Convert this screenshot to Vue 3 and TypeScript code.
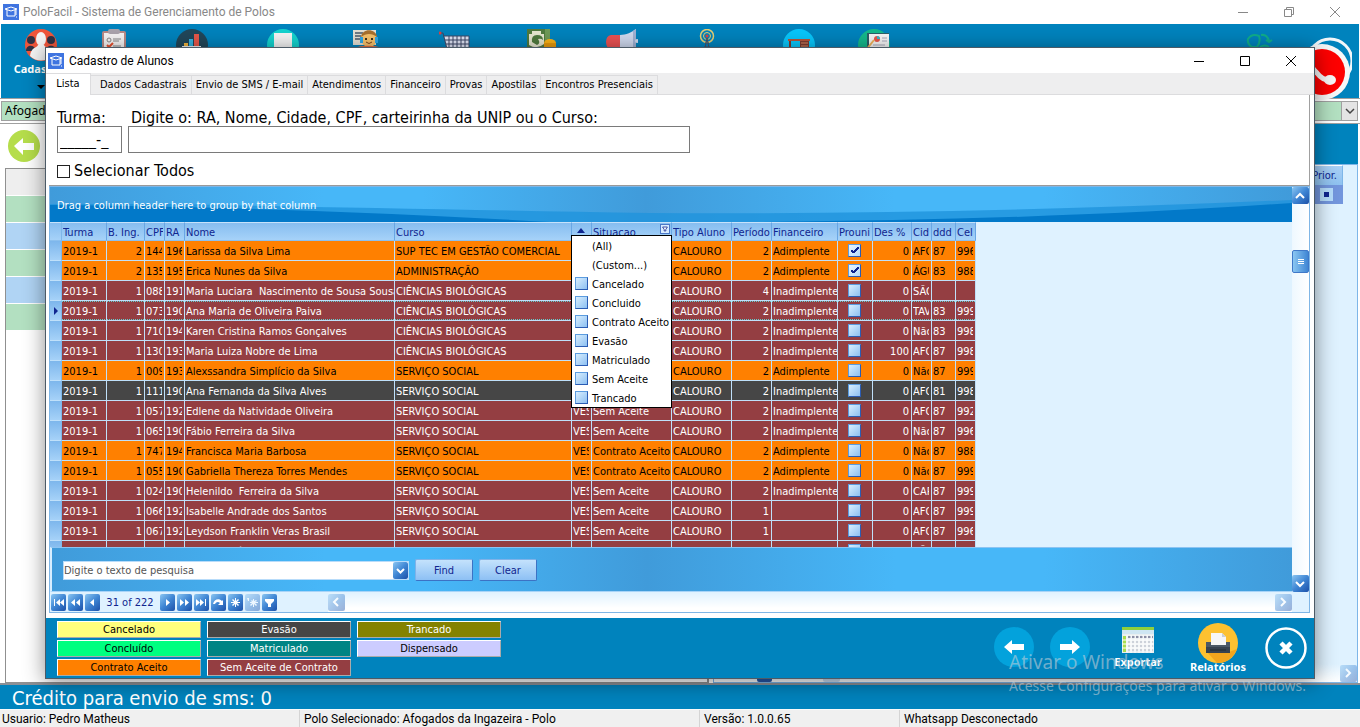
<script setup lang="ts">
import { computed, ref } from 'vue'

type Status = 'Cancelado' | 'Concluído' | 'Contrato Aceito' | 'Evasão' | 'Matriculado' | 'Sem Aceite' | 'Trancado' | 'Dispensado'

interface Aluno {
  ing: string
  cpf: string
  ra: string
  nome: string
  curso: string
  situacao: Status
  periodo: string
  financeiro: string
  prouni: boolean
  desconto: string
  cidade: string
  ddd: string
  cel: string
}

const BIO = 'CIÊNCIAS BIOLÓGICAS'
const SS = 'SERVIÇO SOCIAL'
const AD = 'Adimplente'
const IN = 'Inadimplente'

function aluno(
  ing: string, cpf: string, ra: string, nome: string, curso: string, situacao: Status,
  periodo: string, financeiro: string, prouni: boolean, desconto: string, cidade: string, ddd: string, cel: string,
): Aluno {
  return { ing, cpf, ra, nome, curso, situacao, periodo, financeiro, prouni, desconto, cidade, ddd, cel }
}

const alunos = ref<Aluno[]>([
  aluno('2', '144', '196', 'Larissa da Silva Lima', 'SUP TEC EM GESTÃO COMERCIAL', 'Contrato Aceito', '2', AD, true, '0', 'AFO', '87', '996'),
  aluno('2', '135', '195', 'Erica Nunes da Silva', 'ADMINISTRAÇÃO', 'Contrato Aceito', '2', AD, true, '0', 'ÁGU', '83', '988'),
  aluno('1', '088', '191', 'Maria Luciara  Nascimento de Sousa Sousa', BIO, 'Sem Aceite', '4', IN, false, '0', 'SÃO', '', ''),
  aluno('1', '073', '190', 'Ana Maria de Oliveira Paiva', BIO, 'Sem Aceite', '2', IN, false, '0', 'TAV', '83', '999'),
  aluno('1', '710', '194', 'Karen Cristina Ramos Gonçalves', BIO, 'Sem Aceite', '2', IN, false, '0', 'Não', '83', '998'),
  aluno('1', '130', '193', 'Maria Luiza Nobre de Lima', BIO, 'Sem Aceite', '2', IN, false, '100', 'AFO', '87', '998'),
  aluno('1', '009', '193', 'Alexssandra Simplício da Silva', SS, 'Contrato Aceito', '2', AD, false, '0', 'Não', '87', '999'),
  aluno('1', '111', '190', 'Ana Fernanda da Silva Alves', SS, 'Evasão', '2', IN, false, '0', 'AFO', '81', '998'),
  aluno('1', '057', '192', 'Edlene da Natividade Oliveira', SS, 'Sem Aceite', '2', IN, false, '0', 'AFO', '87', '992'),
  aluno('1', '065', '190', 'Fábio Ferreira da Silva', SS, 'Sem Aceite', '2', IN, false, '0', 'Não', '87', '996'),
  aluno('1', '747', '194', 'Francisca Maria Barbosa', SS, 'Contrato Aceito', '2', AD, false, '0', 'Não', '87', '988'),
  aluno('1', '055', '190', 'Gabriella Thereza Torres Mendes', SS, 'Contrato Aceito', '2', AD, false, '0', 'Não', '87', '999'),
  aluno('1', '024', '190', 'Helenildo  Ferreira da Silva', SS, 'Sem Aceite', '2', IN, false, '0', 'CAR', '87', '999'),
  aluno('1', '066', '192', 'Isabelle Andrade dos Santos', SS, 'Sem Aceite', '1', '', false, '0', 'AFO', '87', '999'),
  aluno('1', '067', '192', 'Leydson Franklin Veras Brasil', SS, 'Sem Aceite', '1', '', false, '0', 'AFO', '87', '996'),
  aluno('1', '081', '192', 'Maria de Fátima da Silva', SS, 'Sem Aceite', '1', '', false, '0', 'SÃO', '87', '999'),
])

const rowClass: Record<Status, string> = {
  'Cancelado': 'cancelado',
  'Concluído': 'concluido',
  'Contrato Aceito': 'contrato',
  'Evasão': 'evasao',
  'Matriculado': 'matriculado',
  'Sem Aceite': 'sem-aceite',
  'Trancado': 'trancado',
  'Dispensado': 'dispensado',
}

const columns = [
  { key: 'ind', label: '' }, { key: 'turma', label: 'Turma' }, { key: 'ing', label: 'B. Ing.' }, { key: 'cpf', label: 'CPF' },
  { key: 'ra', label: 'RA' }, { key: 'nome', label: 'Nome' }, { key: 'curso', label: 'Curso' }, { key: 'forma', label: '' },
  { key: 'situacao', label: 'Situacao' }, { key: 'tipo', label: 'Tipo Aluno' }, { key: 'periodo', label: 'Período' },
  { key: 'financeiro', label: 'Financeiro' }, { key: 'prouni', label: 'Prouni' }, { key: 'desconto', label: 'Des %' },
  { key: 'cidade', label: 'Cid' }, { key: 'ddd', label: 'ddd' }, { key: 'cel', label: 'Cel' },
]

const legend = [
  { label: 'Cancelado', cls: 'cancelado' }, { label: 'Evasão', cls: 'evasao' }, { label: 'Trancado', cls: 'trancado' },
  { label: 'Concluído', cls: 'concluido' }, { label: 'Matriculado', cls: 'matriculado' }, { label: 'Dispensado', cls: 'dispensado' },
  { label: 'Contrato Aceito', cls: 'contrato' }, { label: 'Sem Aceite de Contrato', cls: 'sem-aceite' },
]

const filterOptions = ['Cancelado', 'Concluido', 'Contrato Aceito', 'Evasão', 'Matriculado', 'Sem Aceite', 'Trancado']
const tabs = ['Lista', 'Dados Cadastrais', 'Envio de SMS / E-mail', 'Atendimentos', 'Financeiro', 'Provas', 'Apostilas', 'Encontros Presenciais']

const navBefore = [
  { name: 'Primeiro', d: 'M3 4h1v7h-1zM9 4v7l-4-3.500zM13 4v7l-4-3.500z' },
  { name: 'Página anterior', d: 'M7 4v7l-4-3.500zM12 4v7l-4-3.500z' },
  { name: 'Anterior', d: 'M9 4v7l-4-3.500z' },
]
const navAfter = [
  { name: 'Próximo', d: 'M6 4v7l4-3.500z' },
  { name: 'Próxima página', d: 'M3 4v7l4-3.500zM8 4v7l4-3.500z' },
  { name: 'Último', d: 'M2 4v7l4-3.500zM6 4v7l4-3.500zM11 4h1v7h-1z' },
  { name: 'Atualizar', d: 'M2 9c1-5 6-6 9-3l1-1v5h-5l2-2c-2-2-4-1-5 1z' },
  { name: 'Marcar', d: 'M7 3h1v3l2-2 1 1-2 2h3v1h-3l2 2-1 1-2-2v3h-1v-3l-2 2-1-1 2-2h-3v-1h3l-2-2 1-1 2 2z' },
  { name: 'Ir para marca', d: 'M8 4h1v2l2-1 1 1-2 1h3v1h-3l2 2-1 1-2-2v3h-1v-3l-2 2-1-1 2-2h-2v-1h2l-1-1 1-1 1 1zM2 3h2v3h-1z', off: true },
  { name: 'Filtrar', d: 'M3 4h9v2l-3 3v3h-3v-3l-3-3z' },
]

const turma = ref('_____-_')
const busca = ref('')
const todos = ref(false)
const pesquisa = ref('')
const activeTab = ref('Lista')
const current = ref(3)
const total = 222
const position = computed(() => `${current.value + 28} of ${total}`)
</script>

<template>
  <div class="app">
    <header class="titlebar">
      <svg class="logo" viewBox="0 0 16 16"><rect width="16" height="16" fill="#3f74e0" /><path d="M2 5l6-2 6 2-6 2zM4 6v6h8v-6" fill="none" stroke="#fff" stroke-width="1" /><path d="M13 6v5M13 13h1" stroke="#fff" fill="none" /></svg>
      <h1>PoloFacil - Sistema de Gerenciamento de Polos</h1>
      <div class="winbtns dim">
        <button type="button" aria-label="Minimizar sistema"><svg viewBox="0 0 12 12"><path d="M1 6.500h10" /></svg></button>
        <button type="button" aria-label="Restaurar sistema"><svg viewBox="0 0 12 12"><path d="M1.500 3.500h7v7h-7zM3.500 3v-1.500h7v7h-1.500" /></svg></button>
        <button type="button" aria-label="Fechar sistema"><svg viewBox="0 0 12 12"><path d="M1 1l10 10M11 1l-10 10" /></svg></button>
      </div>
    </header>

    <nav class="toolbar" aria-label="Principal">
      <button type="button" class="tool main-tool">
        <svg viewBox="0 0 32 32"><circle cx="16" cy="16" r="16" fill="#f0563b" /><circle cx="6" cy="11" r="4" fill="#2e3346" /><circle cx="26" cy="11" r="4" fill="#2e3346" /><path d="M1 22c0-7 9-7 10 0zM21 22c0-7 10-7 10 0z" fill="#2e3346" /><ellipse cx="16" cy="10" rx="5" ry="7" fill="#f5f5f5" /><path d="M5 27c1-9 7-8 8-11h6c1 3 7 2 8 11-6 6-16 6-22 0z" fill="#f5f5f5" /></svg>
        <span>Cadastros</span>
        <i class="caret"></i>
      </button>
      <button type="button" class="tool" aria-label="Relatórios gerais">
        <svg viewBox="0 0 32 32"><rect x="4" y="2" width="24" height="28" rx="2" fill="#b98a86" /><rect x="6" y="4" width="20" height="26" fill="#f6f4f4" /><rect x="10" y="0" width="12" height="5" rx="2" fill="#aaa3ac" /><circle cx="11" cy="11" r="2" fill="none" stroke="#888" /><path d="M15 10h8M15 12h6M15 17h8" stroke="#888" /><path d="M9 16l2 2 4-4" stroke="#e8502f" fill="none" stroke-width="2" /></svg>
      </button>
      <button type="button" class="tool" aria-label="Estatísticas">
        <svg viewBox="0 0 32 32"><circle cx="16" cy="16" r="16" fill="#21475a" /><path d="M8 14h4v12h-4z" fill="#f3b53f" /><path d="M13 10h4v16h-4z" fill="#36b3e0" /><path d="M18 5h5v21h-5z" fill="#e8574a" /><path d="M6 17h19v2h-19z" fill="#e9eef2" /></svg>
      </button>
      <button type="button" class="tool" aria-label="Documentos">
        <svg viewBox="0 0 32 32"><circle cx="16" cy="16" r="16" fill="#14d3cf" /><path d="M7 4h18v22h-18z" fill="#f4f4f4" /></svg>
      </button>
      <button type="button" class="tool" aria-label="Suporte">
        <svg viewBox="0 0 32 32"><path d="M2 1h23v15h-23z" fill="#e4e0d4" /><path d="M4 4h8M4 7h6M4 10h7" stroke="#6f7b85" stroke-width="2" /><circle cx="18" cy="10" r="8" fill="#f7c26b" /><path d="M10 8c1-9 15-9 16 0-5-4-11-4-16 0z" fill="#a8702e" /><path d="M9 8h3v6h-3zM24 8h3v6h-3z" fill="#2fa8e8" /><circle cx="15" cy="10" r="1" /><circle cx="21" cy="10" r="1" /><path d="M15 13q3 3 6 0" stroke="#7a4320" fill="none" /><path d="M4 19c4-3 22-3 26 0v3h-26z" fill="#e36b3a" /></svg>
      </button>
      <button type="button" class="tool" aria-label="Vendas">
        <svg viewBox="0 0 32 32"><path d="M5 7h25v14h-22z" fill="#dfe4f4" /><path d="M1 4h3l5 20M4 7h26M6 11h24M7 15h23M8 19h22M10 7v15M14 7v15M18 7v15M22 7v15M26 7v15M30 7v15" stroke="#3c4766" fill="none" stroke-width="1" /><circle cx="1" cy="4" r="1.500" fill="#e04040" /></svg>
      </button>
      <button type="button" class="tool" aria-label="Caixa">
        <svg viewBox="0 0 32 32"><path d="M1 0h23v24h-23z" fill="#4f7a3e" /><path d="M3 2h15v20h-15z" fill="#e6e7cf" /><path d="M19 0h5v24h-5z" fill="#6f9a57" /><path d="M3 2h3v3h-3zM15 2h3v3h-3z" fill="#4f7a3e" /><path d="M6 13q-1-7 5-7 6 0 6 5-2-2-5-1 3 4-1 6z" fill="#4f7a3e" /><path d="M3 16q8 5 15-1v7h-15z" fill="#4f7a3e" /><ellipse cx="24" cy="14" rx="6" ry="4" fill="#fbb216" /><path d="M18 14h12v6h-12z" fill="#e89a0c" /></svg>
      </button>
      <button type="button" class="tool" aria-label="Campanhas">
        <svg viewBox="0 0 32 32"><path d="M5 6h10v14h-10q-5-1-5-7t5-7z" fill="#ea5153" /><path d="M14 6c6 0 12-3 16-6v26c-4-4-10-6-16-6z" fill="#cfd9ee" /><path d="M27 2l3-2v26l-3-2z" fill="#9fb2d4" /><circle cx="31" cy="12" r="2" fill="#cfd9ee" /></svg>
      </button>
      <button type="button" class="tool" aria-label="Antena">
        <svg viewBox="0 0 32 32"><g fill="none" stroke="#e7cf73"><circle cx="16" cy="7" r="6.500" stroke-width="1.500" /><circle cx="16" cy="7" r="3.500" /></g><circle cx="16" cy="7" r="1.500" fill="#e04040" /><path d="M16 9l-4 20M16 9l4 20M14 14h4M13 18h6" stroke="#44506a" fill="none" /></svg>
      </button>
      <button type="button" class="tool" aria-label="Secretaria">
        <svg viewBox="0 0 32 32"><circle cx="16" cy="16" r="16" fill="#08c6fb" /><path d="M5 10h22v2h-22z" fill="#b4543b" /><path d="M6 12h2v13h-2zM17 12h9v13h-9z" fill="#7c3b30" /><path d="M18 14h7M18 17h7" stroke="#d98a62" /></svg>
      </button>
      <button type="button" class="tool" aria-label="Apresentações">
        <svg viewBox="0 0 32 32"><circle cx="16" cy="16" r="16" fill="#15b98c" /><path d="M9 4h22v20h-22z" fill="#2c5f68" /><path d="M11 5h20v16h-20z" fill="#f6f6f6" /><circle cx="19" cy="10" r="3" fill="#e8574a" /><path d="M19 10v-3a3 3 0 0 1 3 3z" fill="#38b6c8" /><path d="M24 9h5M24 12h5M15 16h12" stroke="#aab" /><path d="M8 21l8-10" stroke="#f1b45a" stroke-width="2" /></svg>
      </button>
      <svg class="recycle" viewBox="0 0 28 28"><path d="M12 14h-6q-5-3-4-8 4-6 11-3 2 6-2 11M15 2q6-1 8 6M20 7l3 2 3-2M14 14q5-3 9 0" fill="none" stroke="#0fae8a" stroke-width="2" /></svg>
      <svg class="phone" viewBox="0 0 70 66"><circle cx="48" cy="26" r="22" fill="none" stroke="#f2f7fa" stroke-width="3" /><circle cx="40" cy="37" r="28" fill="#f7f7f7" /><circle cx="40" cy="37" r="23" fill="#fe0000" /><path d="M27 22q1 10 8 16 6 8 14 7" fill="none" stroke="#f7f7f7" stroke-width="5" /><ellipse cx="48" cy="45" rx="6" ry="5" fill="#f7f7f7" /><ellipse cx="28" cy="26" rx="5" ry="6" fill="#f7f7f7" /></svg>
    </nav>

    <div class="polo-row">
      <select class="polo" aria-label="Polo"><option>Afogados da Ingazeira - Polo</option></select>
      <span class="polo-btn"><svg viewBox="0 0 12 12"><path d="M2 4l4 4 4-4" fill="none" stroke="#444" stroke-width="1.500" /></svg></span>
    </div>

    <div class="band">
      <button type="button" class="back" aria-label="Voltar"><svg viewBox="0 0 32 32"><circle cx="16" cy="16" r="16" fill="#b5dd4b" /><path d="M6 16l9-8v5h11v7h-11v5z" fill="#fff" /></svg></button>
      <div class="band-fill"></div>
    </div>

    <main class="workspace">
      <div class="pane-left"><i class="r0"></i><i class="g"></i><i class="b"></i><i class="g"></i><i class="b"></i><i class="g"></i></div>
      <div class="pane-right">
        <div class="prior">
          <span>Prior.</span>
          <em><b></b></em>
        </div>
        <div class="pane-foot"><i class="stub"></i><i class="stub off"></i><span class="sbtn off"><svg viewBox="0 0 16 16"><path d="M6 4l4 4-4 4" /></svg></span></div>
      </div>
    </main>

    <div class="sms">Crédito para envio de sms: 0</div>
    <footer class="status">
      <span>Usuario: Pedro Matheus</span><span>Polo Selecionado: Afogados da Ingazeira - Polo</span><span>Versão: 1.0.0.65</span><span>Whatsapp Desconectado</span>
    </footer>

    <section class="dialog" role="dialog" aria-labelledby="dlg-title">
      <header class="dlg-title">
        <svg class="logo" viewBox="0 0 16 16"><rect width="16" height="16" fill="#3f74e0" /><path d="M2 5l6-2 6 2-6 2zM4 6v6h8v-6" fill="none" stroke="#fff" stroke-width="1" /><path d="M13 6v5M13 13h1" stroke="#fff" fill="none" /></svg>
        <h2 id="dlg-title">Cadastro de Alunos</h2>
        <div class="winbtns">
          <button type="button" aria-label="Minimizar"><svg viewBox="0 0 12 12"><path d="M1 6.500h10" /></svg></button>
          <button type="button" aria-label="Maximizar"><svg viewBox="0 0 12 12"><path d="M1.500 1.500h9v9h-9z" /></svg></button>
          <button type="button" aria-label="Fechar"><svg viewBox="0 0 12 12"><path d="M1 1l10 10M11 1l-10 10" /></svg></button>
        </div>
      </header>

      <div class="tabs" role="tablist">
        <button v-for="t in tabs" :key="t" type="button" role="tab" :aria-selected="t === activeTab" :class="{ active: t === activeTab }" @click="activeTab = t">{{ t }}</button>
      </div>

      <div class="page">
        <form class="search" @submit.prevent>
          <div class="fields">
            <div class="field small"><label for="turma">Turma:</label><input id="turma" v-model="turma" type="text"></div>
            <div class="field big"><label for="busca">Digite o: RA, Nome, Cidade, CPF, carteirinha da UNIP ou o Curso:</label><input id="busca" v-model="busca" type="text"></div>
          </div>
          <label class="all"><input v-model="todos" type="checkbox"><span>Selecionar Todos</span></label>
        </form>

        <div class="grid">
          <div class="grid-body">
            <div class="group">
              <svg viewBox="0 0 1242 35" preserveAspectRatio="none">
                <path d="M0 17h120q200 4 480 9 300 2 642-13v22h-1242z" fill="#1f94dc" fill-opacity=".8" />
                <path d="M0 18q240 2 500 17h-500zM700 35q300-2 542-19v19z" fill="#0279c9" />
              </svg>
              <span>Drag a column header here to group by that column</span>
            </div>

            <div class="viewport">
              <table>
                <colgroup><col v-for="c in columns" :key="c.key" :class="'c-' + c.key"></colgroup>
                <thead>
                  <tr>
                    <th v-for="c in columns" :key="c.key" scope="col">
                      <div v-if="c.key === 'forma'" class="cell"><svg class="sort" viewBox="0 0 8 5"><path d="M0 5l4-5 4 5z" fill="#10258f" /></svg></div>
                      <div v-else class="cell">{{ c.label }}<button v-if="c.key === 'situacao'" type="button" class="funnel" aria-label="Filtrar Situacao"><svg viewBox="0 0 10 10"><path d="M2 2.500h6l-2 3v2h-2v-2z" fill="#fff" stroke="#10258f" /></svg></button></div>
                    </th>
                  </tr>
                </thead>
                <tbody>
                  <tr v-for="(a, i) in alunos" :key="a.nome" :class="[rowClass[a.situacao], { focused: i === current }]" @click="current = i">
                    <td class="ind"><svg v-if="i === current" viewBox="0 0 4 8"><path d="M0 0l4 4-4 4z" fill="#10258f" /></svg></td>
                    <td><div class="cell">2019-1</div></td>
                    <td class="num"><div class="cell">{{ a.ing }}</div></td>
                    <td><div class="cell">{{ a.cpf }}</div></td>
                    <td><div class="cell">{{ a.ra }}</div></td>
                    <td class="wide"><div class="cell">{{ a.nome }}</div></td>
                    <td><div class="cell">{{ a.curso }}</div></td>
                    <td><div class="cell">VES</div></td>
                    <td class="wide"><div class="cell">{{ a.situacao }}</div></td>
                    <td><div class="cell">CALOURO</div></td>
                    <td class="num"><div class="cell">{{ a.periodo }}</div></td>
                    <td class="wide"><div class="cell">{{ a.financeiro }}</div></td>
                    <td class="mid"><input v-model="a.prouni" class="box" type="checkbox" :aria-label="'Prouni ' + a.nome"></td>
                    <td class="num"><div class="cell">{{ a.desconto }}</div></td>
                    <td><div class="cell">{{ a.cidade }}</div></td>
                    <td><div class="cell">{{ a.ddd }}</div></td>
                    <td><div class="cell">{{ a.cel }}</div></td>
                  </tr>
                </tbody>
              </table>
            </div>

            <div class="find">
              <div class="find-box">
                <input v-model="pesquisa" type="text" placeholder="Digite o texto de pesquisa" aria-label="Texto de pesquisa">
                <button type="button" class="nbtn" aria-label="Histórico"><svg viewBox="0 0 15 15"><path class="line" d="M4 6l3.500 3.500 3.500-3.500" /></svg></button>
              </div>
              <button type="button" class="soft">Find</button>
              <button type="button" class="soft">Clear</button>
            </div>

            <ul class="popup">
              <li><button type="button">(All)</button></li>
              <li><button type="button">(Custom...)</button></li>
              <li v-for="o in filterOptions" :key="o"><label><input class="box" type="checkbox"><span>{{ o }}</span></label></li>
            </ul>
          </div>

          <div class="vscroll">
            <button type="button" class="sbtn" aria-label="Subir"><svg viewBox="0 0 16 16"><path d="M4 10l4-4 4 4" /></svg></button>
            <span class="thumb"><i></i><i></i><i></i></span>
            <button type="button" class="sbtn down" aria-label="Descer"><svg viewBox="0 0 16 16"><path d="M4 6l4 4 4-4" /></svg></button>
          </div>

          <div class="navigator">
            <button v-for="n in navBefore" :key="n.name" type="button" class="nbtn" :aria-label="n.name"><svg viewBox="0 0 15 15"><path :d="n.d" /></svg></button>
            <output>{{ position }}</output>
            <button v-for="n in navAfter" :key="n.name" type="button" class="nbtn" :class="{ off: n.off }" :aria-label="n.name"><svg viewBox="0 0 15 15"><path :d="n.d" /></svg></button>
            <div class="hscroll">
              <button type="button" class="sbtn off" aria-label="Rolar à esquerda"><svg viewBox="0 0 16 16"><path d="M10 4l-4 4 4 4" /></svg></button>
              <button type="button" class="sbtn off" aria-label="Rolar à direita"><svg viewBox="0 0 16 16"><path d="M6 4l4 4-4 4" /></svg></button>
            </div>
          </div>
        </div>
      </div>

      <footer class="dlg-foot">
        <div class="legend"><span v-for="l in legend" :key="l.label" :class="l.cls">{{ l.label }}</span></div>
        <div class="actions">
          <button type="button" class="act" aria-label="Registro anterior"><svg width="40" height="40" viewBox="0 0 40 40"><circle cx="20" cy="20" r="20" fill="#03a2dc" /><path d="M10 20l8-7v4h12v6h-12v4z" fill="#fff" /></svg></button>
          <button type="button" class="act next" aria-label="Próximo registro"><svg width="40" height="40" viewBox="0 0 40 40"><circle cx="20" cy="20" r="20" fill="#03a2dc" /><path d="M30 20l-8-7v4h-12v6h12v4z" fill="#fff" /></svg></button>
          <button type="button" class="act export">
            <svg width="32" height="28" viewBox="0 0 32 28"><path d="M0 0h32v26h-32z" fill="#e9eef0" /><path d="M0 0h32v3h-32z" fill="#8fcf3c" /><path d="M0 3h32v4h-32z" fill="#cfe6f2" /><path d="M1 9h3v16h-3z" fill="#a8dc50" /><path d="M6 10h25" stroke="#8c8fa6" stroke-width="2" stroke-dasharray="3 1" /><path d="M0 13h32M0 17h32M0 21h32M5 8v18M9 8v18M13 8v18M17 8v18M21 8v18M25 8v18M29 8v18" stroke="#fff" /><path d="M6 15h25M6 19h25M6 23h25" stroke="#cdd2da" stroke-width="2" stroke-dasharray="2 2" /></svg>
            <span>Exportar</span>
          </button>
          <button type="button" class="act report">
            <svg width="40" height="40" viewBox="0 0 40 40"><circle cx="20" cy="20" r="20" fill="#fdc130" /><path d="M31 29l8-3q-6 14-20 14l-10-11z" fill="#f2a51d" /><path d="M8 19h24v11h-24z" fill="#37424f" /><path d="M13 10h11l4 4v8h-15z" fill="#f6f6f6" /><path d="M24 10v4h4z" fill="#c9ced4" /><path d="M8 19h5v3h15v-3h4v5h-24z" fill="#4b5866" /><path d="M12 27h16" stroke="#222a33" stroke-width="1" /></svg>
            <span>Relatórios</span>
          </button>
          <button type="button" class="act close" aria-label="Fechar cadastro"><svg width="42" height="42" viewBox="0 0 42 42"><circle cx="21" cy="21" r="19.500" fill="none" stroke="#fff" stroke-width="2.500" /><path d="M16 16l10 10M26 16l-10 10" stroke="#fff" stroke-width="4.500" /></svg></button>
        </div>
      </footer>
    </section>

    <div class="watermark"><strong>Ativar o Windows</strong><span>Acesse Configurações para ativar o Windows.</span></div>
  </div>
</template>

<style>
html, body { height: 100%; }
body { margin: 0; overflow: hidden; }
#app { height: 100%; }
</style>

<style scoped>
.app {
  --ui: Roboto, "Open Sans", sans-serif;
  --wide: "Noto Sans", "Open Sans", sans-serif;
  --form: "DejaVu Sans Condensed", "DejaVu Sans", sans-serif;
  --blue: #0083bd;
  position: relative;
  display: flex;
  flex-direction: column;
  min-height: 100%;
  overflow: hidden;
  background: #fff;
  font-family: var(--form);
  font-size: 11px;
  color: #000;
}
.app *, .app *::before { box-sizing: border-box; }
button, input, select { font: inherit; color: inherit; margin: 0; padding: 0; border: 0; background: none; border-radius: 0; }
h1, h2 { margin: 0; font-weight: 400; }
svg { display: block; }

.titlebar, .dlg-title { display: flex; align-items: center; font-family: var(--ui); }
.titlebar { height: 24px; padding-left: 3px; gap: 4px; color: #888; flex: none; }
h1, h2 { font-size: 12px; line-height: 16px; flex: 1; }
.logo { width: 16px; height: 16px; }
.winbtns { display: flex; }
.winbtns button { width: 46px; height: 22px; display: grid; place-items: center; }
.winbtns svg { width: 12px; height: 12px; fill: none; stroke: #000; }
.winbtns.dim svg { stroke: #888; }
.winbtns.dim { margin-right: 2px; }

.toolbar {
  height: 74px;
  flex: none;
  display: grid;
  grid-template-columns: 72px 74px 82px 100px 68px 108px 66px 94px 76px 108px 42px 1fr auto;
  padding: 5px 5px 0 4px;
  margin: 0 1px;
  background: var(--blue);
}
.tool { display: flex; flex-direction: column; align-items: center; align-self: start; }
.tool svg { width: 32px; height: 32px; }
.tool span { color: #fff; font: 700 11px/16px var(--wide); }
.caret { border: 4px solid transparent; border-top-color: #000; border-bottom: 0; margin-top: 8px; }
.recycle { width: 28px; height: 28px; justify-self: end; margin: 4px 8px 0 0; }
.phone { width: 70px; height: 66px; margin: 6px 2px 0 0; position: relative; }

.polo-row { height: 26px; flex: none; display: flex; padding: 2px 2px 2px 1px; border-top: 1px solid #a0a0a0; border-bottom: 1px solid #a0a0a0; }
.polo { flex: 1; appearance: none; background: #b3e0c1; padding-left: 3px; font: 12px/18px var(--wide); border: 1px solid #a0a0a0; border-right: 0; }
.polo-btn { width: 17px; border: 1px solid #a0a0a0; background: #e4e4e4; display: grid; place-items: center; }
.polo-btn svg { width: 12px; height: 12px; }
.band { height: 44px; flex: none; display: flex; padding: 0 2px 0 8px; align-items: center; }
.back svg { width: 32px; height: 32px; }
.band-fill { flex: 1; align-self: stretch; margin-left: 12px; background: var(--blue); border-bottom: 4px solid #fff; }

.workspace { flex: 1; display: flex; gap: 4px; padding: 0 2px 0 5px; border-bottom: 2px solid #8c9096; }
.pane-left { width: 52%; border: 1px solid #909090; border-right-width: 2px; display: flex; flex-direction: column; }
.pane-left i { height: 27px; flex: none; border-bottom: 1px solid #fff; }
.pane-left .r0 { height: 27px; background: #eee; }
.pane-left .g { background: #b3e0c1; }
.pane-left .b { background: #b0d4f4; }
.pane-right { flex: 1; display: flex; flex-direction: column; justify-content: space-between; background: #dff2ff; margin-top: -4px; border: 1px solid #7eb6e8; }
.prior { align-self: flex-end; width: 40px; margin-right: 14px; color: #10258f; }
.prior span { display: block; height: 20px; background: linear-gradient(#a9d0f6, #8fc2f0); border-top: 1px solid #fff; border-right: 1px solid #7eb6e8; line-height: 20px; text-align: right; padding-right: 5px; }
.prior em { display: grid; height: 19px; background: #7396dd; padding-left: 6px; place-items: center; }
.prior b { width: 13px; height: 13px; border: 4px solid #b5dcfb; background: #10258f; }
.pane-foot { display: flex; height: 18px; align-items: center; padding-left: 43px; background: linear-gradient(#dff2ff, #fff); }
.stub { width: 15px; height: 18px; background: #2657a8; border-radius: 2px; margin-right: 51px; }
.stub.off { background: #8db4e0; width: 17px; }
.pane-foot .sbtn { margin-left: auto; }

.sms { flex: none; height: 24px; background: var(--blue); color: #fff; font: 20px/26px var(--form); padding-left: 12px; }
.status { flex: none; display: flex; height: 18px; background: #f0f0f0; border-top: 1px solid #fafafa; font: 12px/19px var(--ui); }
.status span { width: 200px; padding-left: 4px; border-left: 1px solid #d4d4d4; white-space: nowrap; }
.status span:nth-child(1) { width: 299px; padding-left: 2px; border: 0; }
.status span:nth-child(2) { width: 400px; }
.status span:last-child { flex: 1; }

.dialog {
  position: absolute;
  inset: 47px 45px 48px 45px;
  display: flex;
  flex-direction: column;
  background: #fff;
  border: 1px solid #4c5a66;
  box-shadow: 0 3px 20px rgba(0, 0, 0, .45);
}
.dlg-title { height: 25px; flex: none; padding-left: 2px; gap: 5px; }
.tabs { flex: none; height: 22px; display: flex; align-items: flex-end; background: #eeeeef; border-bottom: 1px solid #dcdcde; }
.tabs button { height: 19px; padding: 0 4px; border: 1px solid #dcdcde; border-left: 0; border-bottom: 0; line-height: 18px; white-space: nowrap; }
.tabs button:nth-child(2) { padding-left: 9px; }
.tabs .active { align-self: stretch; height: 22px; margin-bottom: -1px; width: 45px; background: #fff; line-height: 19px; padding-bottom: 2px; }

.page { flex: 1; display: flex; flex-direction: column; padding: 0 4px 3px 3px; min-height: 0; }
.search { padding: 14px 8px 0; height: 91px; flex: none; font-size: 16px; border-bottom: 1px solid #9a9a9a; border-right: 1px solid #a0a0a0; }
.fields { display: flex; gap: 6px; }
.field { display: flex; flex-direction: column; }
.field label { line-height: 17px; white-space: nowrap; }
.field input { height: 27px; border: 1px solid #7a7a7a; padding: 0 2px; }
.field.small { width: 65px; }
.field.big { width: 562px; }
.field.big label { padding-left: 3px; }
.all { display: flex; align-items: center; gap: 4px; margin-top: 8px; line-height: 20px; width: max-content; }
.all input { appearance: none; width: 13px; height: 13px; border: 1px solid #222; background: #fff; }

.grid { flex: 1; min-height: 0; display: grid; grid-template: minmax(0, 1fr) 20px / minmax(0, 1fr) 17px; border: 1px solid #7fb6e6; background: #dff2ff; }
.grid-body { position: relative; display: flex; flex-direction: column; min-height: 0; }
.group, .find { background: linear-gradient(90deg, #409bda, #47b7f8 22%, #47b7f8 30%, #409bda 48%, #47b7f8 68%, #47b7f8 80%, #409bda); }
.group { height: 35px; flex: none; position: relative; display: flex; align-items: center; padding: 1px 0 0 7px; color: #fff; }
.group svg { position: absolute; inset: 0; width: 100%; height: 100%; }
.group span { position: relative; }
.viewport { flex: 1; min-height: 0; overflow: hidden; }
table { table-layout: fixed; width: 926px; border-collapse: separate; border-spacing: 0; }
.c-ind { width: 12px; } .c-turma { width: 45px; } .c-ing { width: 38px; } .c-cpf, .c-ra, .c-forma, .c-cidade, .c-cel { width: 20px; }
.c-nome { width: 210px; } .c-curso { width: 177px; } .c-situacao { width: 80px; } .c-tipo { width: 60px; } .c-periodo { width: 40px; }
.c-financeiro { width: 66px; } .c-prouni { width: 35px; } .c-desconto { width: 39px; } .c-ddd { width: 24px; }
th { height: 19px; padding: 0; font-weight: 400; text-align: left; color: #10258f; background: linear-gradient(#86bdf0, #a6d2f8); border-right: 1px solid #68a6e4; border-bottom: 1px solid #8cc0ee; border-top: 1px solid #c6e2fb; }
td { height: 20px; padding: 0; border-right: 1px solid #bfe0fa; border-bottom: 1px solid #bfe0fa; }
.cell { position: relative; height: 17px; line-height: 19px; margin: 0 2px 0 1px; overflow: hidden; white-space: pre; }
th .cell { margin-right: 1px; }
td .cell { height: 19px; line-height: 21px; }
th:nth-child(1), td:nth-child(1) { border-right-color: #7eb6e8; }
.num .cell { text-align: right; }
.wide .cell { margin-right: 0; }
.mid { text-align: center; line-height: 0; }
.mid .box { margin-right: 2px; }
.ind { background: linear-gradient(#7db6ec, #a6d2f8); }
.ind svg { width: 4px; height: 8px; margin-left: 4px; }
.sort { width: 8px; height: 5px; margin: 5px 0 0 4px; }
.funnel { position: absolute; right: 0; top: 1px; width: 10px; height: 10px; border: 1px solid #4a78c8; background: #d8ecff; }
.box { appearance: none; width: 13px; height: 13px; border: 1px solid #5b9ce0; border-right-color: #2a5cb4; border-bottom-color: #2a5cb4; background: linear-gradient(135deg, #d8eefe, #8dc0f2); vertical-align: middle; }
.box:checked { background: linear-gradient(-45deg, transparent 40%, #10258f 40% 60%, transparent 60%) 4px 2px / 6px 6px no-repeat, linear-gradient(45deg, transparent 30%, #10258f 30% 70%, transparent 70%) 2px 5px / 3px 3px no-repeat, linear-gradient(135deg, #e8f5ff, #b4dafa); }

.cancelado { background: #ffff7c; }
.concluido { background: #00ff80; }
.contrato { background: #ff8000; }
.evasao { background: #464646; color: #fff; }
.matriculado { background: #008484; color: #fff; }
.sem-aceite { background: #943e42; color: #fff; }
.trancado { background: #848200; color: #fff; }
.dispensado { background: #ccccff; }
.focused td:not(.ind) {
  background: repeating-linear-gradient(90deg, #6cc 0 1px, transparent 1px 2px) top / 100% 1px no-repeat, repeating-linear-gradient(90deg, #6cc 0 1px, transparent 1px 2px) bottom / 100% 1px no-repeat;
}

.find { flex: none; height: 45px; display: flex; align-items: center; gap: 6px; padding: 1px 0 0 11px; border-top: 1px solid #8cc4f2; border-left: 2px solid #d8eeff; border-bottom: 1px solid #a8d4f8; }
.find-box { width: 346px; height: 19px; display: flex; background: #fff; border: 1px solid #b8dcfa; align-items: center; }
.find-box input { flex: 1; min-width: 0; height: 17px; outline: 0; }
.find-box input::placeholder { color: #555; opacity: 1; }
.soft { width: 58px; height: 22px; color: #10258f; border: 1px solid #7fb2e8; border-bottom-color: #3c72c4; border-right-color: #3c72c4; border-radius: 2px; background: linear-gradient(#c4e2fc, #8dc0f4); }

.nbtn, .sbtn { background: linear-gradient(135deg, #8ac6f2, #3f86d4 50%, #1c50a8); border-radius: 2px; flex: none; display: block; }
.nbtn { width: 15px; height: 17px; }
.nbtn svg { width: 15px; height: 15px; fill: #fff; }
.line, .sbtn svg { fill: none; stroke: #fff; stroke-width: 2; }
.sbtn { width: 17px; height: 17px; }
.sbtn svg { width: 16px; height: 16px; }
.off { opacity: .45; }
.vscroll { display: flex; flex-direction: column; background: linear-gradient(90deg, #eef8ff, #fff); }
.thumb { height: 23px; margin: 46px 0 0; border-radius: 2px; background: linear-gradient(90deg, #8ac6f2, #3f86d4); border: 1px solid #3f78c8; display: flex; flex-direction: column; gap: 1px; justify-content: center; align-items: center; }
.thumb i { width: 6px; height: 1px; background: #fff; }
.vscroll .down { margin-top: auto; }
.navigator { grid-column: 1 / 3; display: flex; align-items: center; gap: 2px; padding: 0 17px 0 1px; }
.navigator output { width: 56px; text-align: center; color: #10258f; white-space: nowrap; }
.hscroll { flex: 1; margin-left: 49px; display: flex; justify-content: space-between; align-items: center; align-self: stretch; background: linear-gradient(#dff2ff, #fff 80%); }

.popup { position: absolute; left: 521px; top: 48px; width: 101px; margin: 0; padding: 0; list-style: none; background: #fff; border: 1px solid #000; }
.popup li { height: 19px; line-height: 21px; white-space: nowrap; }
.popup button { padding-left: 20px; line-height: 21px; display: block; }
.popup label { display: flex; align-items: center; gap: 4px; padding-left: 3px; }
.popup .box { flex: none; margin-bottom: 3px; }

.dlg-foot { flex: none; height: 62px; display: flex; justify-content: space-between; border-top: 2px solid #fff; background: var(--blue); }
.legend { display: grid; grid-template-columns: repeat(3, 144px); grid-auto-rows: 17px; gap: 2px 6px; padding: 3px 0 0 11px; }
.legend span { text-align: center; line-height: 16px; border: 1px solid #fff; border-right-color: #aaa; border-bottom-color: #aaa; }
.actions { display: flex; align-items: flex-start; padding: 9px 7px 0 0; }
.act { display: flex; flex-direction: column; align-items: center; color: #fff; font: 700 11px/12px var(--wide); }
.act.next { margin-left: 16px; }
.act.export { width: 60px; margin-left: 18px; }
.act.export span { margin-top: 1px; }
.act.report { width: 64px; margin: -4px 0 0 18px; }
.act.report span { margin-top: -2px; }
.act.close { margin-left: 15px; }

.watermark { position: absolute; right: 54px; bottom: 32px; display: flex; flex-direction: column; gap: 4px; color: rgba(190, 205, 215, .6); font-family: var(--wide); pointer-events: none; white-space: nowrap; }
.watermark strong { font-weight: 400; font-size: 19px; line-height: 22px; }
.watermark span { font-size: 14px; line-height: 18px; }
</style>
